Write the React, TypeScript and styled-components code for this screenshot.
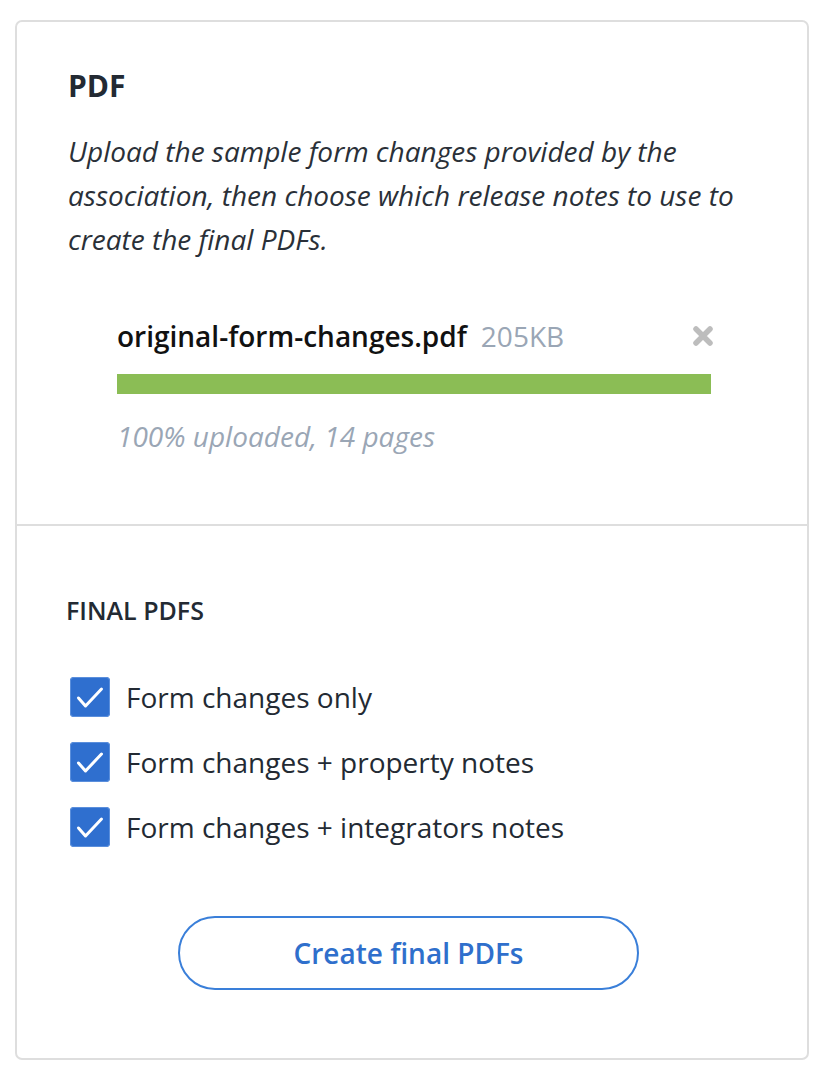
import styled, { createGlobalStyle } from "styled-components";

const GlobalStyle = createGlobalStyle`
  body {
    margin: 0;
    background: #ffffff;
    font-family: "Open Sans", "Noto Sans", sans-serif;
    color: #232a33;
  }
`;

const Page = styled.div`
  padding: 20px 21px 24px 15px;
`;

const Card = styled.div`
  border: 2px solid #dedede;
  border-radius: 7px;
  background: #fff;
`;

const Section = styled.section<{ $top: number; $bottom: number; $divider?: boolean }>`
  padding: ${({ $top, $bottom }) => `${$top}px 51px ${$bottom}px 51px`};
  border-bottom: ${({ $divider }) => ($divider ? "2px solid #dedede" : "none")};
`;

const Title = styled.h2`
  margin: 0 0 25px;
  font-size: 30px;
  line-height: 36px;
  font-weight: 700;
  color: #232a33;
`;

const Description = styled.p`
  margin: 0;
  font-size: 28px;
  line-height: 44px;
  font-style: italic;
  color: #2a3038;
`;

const FileBlock = styled.div`
  margin: 57px 45px 0 49px;
`;

const FileRow = styled.div`
  display: flex;
  align-items: center;
  height: 36px;
`;

const FileName = styled.span`
  font-size: 28px;
  font-weight: 600;
  color: #111;
`;

const FileSize = styled.span`
  margin-left: 14px;
  font-size: 28px;
  color: #9aa6b5;
  flex: 1;
`;

const RemoveButton = styled.button`
  border: 0;
  background: none;
  padding: 0;
  margin-right: -3px;
  display: flex;
  cursor: pointer;
`;

const Progress = styled.div`
  margin-top: 20px;
  height: 20px;
  background: #e6e6e6;
`;

const ProgressFill = styled.div`
  height: 100%;
  background: #8bbd55;
`;

const Status = styled.div`
  margin-top: 24px;
  font-size: 28px;
  line-height: 36px;
  font-style: italic;
  color: #9aa6b5;
`;

const Heading = styled.h3`
  margin: 0 0 52px -2px;
  font-size: 25px;
  line-height: 30px;
  font-weight: 600;
  text-transform: uppercase;
  color: #232a33;
`;

const Options = styled.div`
  display: flex;
  flex-direction: column;
  gap: 25px;
`;

const Option = styled.label`
  display: flex;
  align-items: center;
  gap: 16px;
  margin-left: 2px;
  font-size: 28px;
  line-height: 40px;
  color: #232a33;
  cursor: pointer;
`;

const Box = styled.span`
  width: 40px;
  height: 40px;
  border-radius: 4px;
  background: #2f6fcf;
  box-shadow: inset 0 0 0 1px #5b8fdc;
  display: flex;
  flex-shrink: 0;
`;

const ButtonRow = styled.div`
  display: flex;
  justify-content: center;
  margin-top: 69px;
  padding-right: 7px;
`;

const PrimaryButton = styled.button`
  width: 461px;
  height: 74px;
  border: 2px solid #3a7fd9;
  border-radius: 37px;
  background: #fff;
  font-family: "Open Sans", sans-serif;
  font-size: 28px;
  font-weight: 600;
  color: #2f6fcc;
  cursor: pointer;
`;

const options = [
  "Form changes only",
  "Form changes + property notes",
  "Form changes + integrators notes",
];

function Check() {
  return (
    <svg width="40" height="40" viewBox="0 0 40 40" fill="none">
      <path d="M8.5 21 L15.5 29 L31.5 12" stroke="#fff" strokeWidth="3" strokeLinecap="round" strokeLinejoin="round" />
    </svg>
  );
}

export default function App() {
  const uploaded = 100;
  return (
    <Page>
      <GlobalStyle />
      <Card>
        <Section $top={46} $bottom={70} $divider>
          <Title>PDF</Title>
          <Description>
            Upload the sample form changes provided by the association, then choose which
            release notes to use to create the final PDFs.
          </Description>
          <FileBlock>
            <FileRow>
              <FileName>original-form-changes.pdf</FileName>
              <FileSize>205KB</FileSize>
              <RemoveButton aria-label="Remove file">
                <svg width="22" height="22" viewBox="0 0 22 22">
                  <path d="M4 4 L18 18 M18 4 L4 18" stroke="#bdbdbd" strokeWidth="5.5" strokeLinecap="round" />
                </svg>
              </RemoveButton>
            </FileRow>
            <Progress>
              <ProgressFill style={{ width: `${uploaded}%` }} />
            </Progress>
            <Status>100% uploaded, 14 pages</Status>
          </FileBlock>
        </Section>
        <Section $top={69} $bottom={68}>
          <Heading>Final PDFs</Heading>
          <Options>
            {options.map((o) => (
              <Option key={o}>
                <Box>
                  <Check />
                </Box>
                {o}
              </Option>
            ))}
          </Options>
          <ButtonRow>
            <PrimaryButton>Create final PDFs</PrimaryButton>
          </ButtonRow>
        </Section>
      </Card>
    </Page>
  );
}
